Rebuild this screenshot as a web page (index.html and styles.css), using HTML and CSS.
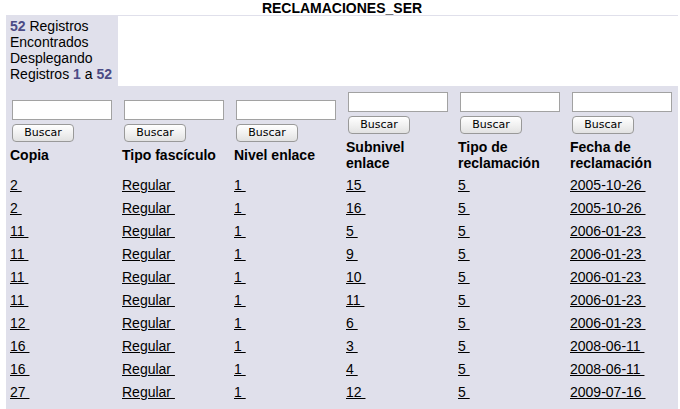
FILE: index.html
```html
<!DOCTYPE html>
<html lang="es">
<head>
<meta charset="utf-8">
<title>RECLAMACIONES_SER</title>
<link rel="stylesheet" href="styles.css">
</head>
<body>
<div class="title">RECLAMACIONES_SER</div>
<table class="grid">
  <colgroup>
    <col class="c"><col class="c"><col class="c"><col class="c"><col class="c"><col class="c">
  </colgroup>
  <tr class="info-row">
    <td class="info"><div class="info-box"><span class="ln"><b class="num">52</b> Registros</span><span class="ln">Encontrados</span><span class="ln">Desplegando</span><span class="ln">Registros <b class="num">1</b> a <b class="num">52</b></span></div></td>
    <td class="blank" colspan="5"><div class="blank-box"></div></td>
  </tr>
  <tr class="head-row">
    <th><div class="hcell"><input class="filter" type="text"><button class="btn" type="button">Buscar</button><span class="lbl">Copia</span></div></th>
    <th><div class="hcell"><input class="filter" type="text"><button class="btn" type="button">Buscar</button><span class="lbl">Tipo fascículo</span></div></th>
    <th><div class="hcell"><input class="filter" type="text"><button class="btn" type="button">Buscar</button><span class="lbl">Nivel enlace</span></div></th>
    <th><div class="hcell"><input class="filter" type="text"><button class="btn" type="button">Buscar</button><span class="lbl">Subnivel enlace</span></div></th>
    <th><div class="hcell"><input class="filter" type="text"><button class="btn" type="button">Buscar</button><span class="lbl">Tipo de reclamación</span></div></th>
    <th><div class="hcell"><input class="filter" type="text"><button class="btn" type="button">Buscar</button><span class="lbl">Fecha de reclamación</span></div></th>
  </tr>
  <tr class="row"><td><a href="#">2 </a></td><td><a href="#">Regular </a></td><td><a href="#">1 </a></td><td><a href="#">15 </a></td><td><a href="#">5 </a></td><td><a href="#">2005-10-26 </a></td></tr>
  <tr class="row"><td><a href="#">2 </a></td><td><a href="#">Regular </a></td><td><a href="#">1 </a></td><td><a href="#">16 </a></td><td><a href="#">5 </a></td><td><a href="#">2005-10-26 </a></td></tr>
  <tr class="row"><td><a href="#">11 </a></td><td><a href="#">Regular </a></td><td><a href="#">1 </a></td><td><a href="#">5 </a></td><td><a href="#">5 </a></td><td><a href="#">2006-01-23 </a></td></tr>
  <tr class="row"><td><a href="#">11 </a></td><td><a href="#">Regular </a></td><td><a href="#">1 </a></td><td><a href="#">9 </a></td><td><a href="#">5 </a></td><td><a href="#">2006-01-23 </a></td></tr>
  <tr class="row"><td><a href="#">11 </a></td><td><a href="#">Regular </a></td><td><a href="#">1 </a></td><td><a href="#">10 </a></td><td><a href="#">5 </a></td><td><a href="#">2006-01-23 </a></td></tr>
  <tr class="row"><td><a href="#">11 </a></td><td><a href="#">Regular </a></td><td><a href="#">1 </a></td><td><a href="#">11 </a></td><td><a href="#">5 </a></td><td><a href="#">2006-01-23 </a></td></tr>
  <tr class="row"><td><a href="#">12 </a></td><td><a href="#">Regular </a></td><td><a href="#">1 </a></td><td><a href="#">6 </a></td><td><a href="#">5 </a></td><td><a href="#">2006-01-23 </a></td></tr>
  <tr class="row"><td><a href="#">16 </a></td><td><a href="#">Regular </a></td><td><a href="#">1 </a></td><td><a href="#">3 </a></td><td><a href="#">5 </a></td><td><a href="#">2008-06-11 </a></td></tr>
  <tr class="row"><td><a href="#">16 </a></td><td><a href="#">Regular </a></td><td><a href="#">1 </a></td><td><a href="#">4 </a></td><td><a href="#">5 </a></td><td><a href="#">2008-06-11 </a></td></tr>
  <tr class="row"><td><a href="#">27 </a></td><td><a href="#">Regular </a></td><td><a href="#">1 </a></td><td><a href="#">12 </a></td><td><a href="#">5 </a></td><td><a href="#">2009-07-16 </a></td></tr>
  <tr class="pad-row"><td colspan="6"><div class="pad-box"></div></td></tr>
</table>
</body>
</html>
```
FILE: styles.css
```css
html, body {
  margin: 0;
  padding: 0;
  background: #ffffff;
}
body {
  font-family: "Liberation Sans", Arial, sans-serif;
  font-size: 14px;
  color: #000;
  padding: 0 2px 0 6px;
}
.title {
  font-weight: bold;
  font-size: 14px;
  line-height: 16px;
  text-align: center;
  height: 15px;
}
.grid {
  border-collapse: collapse;
  border-spacing: 0;
  table-layout: fixed;
  width: 672px;
  background: #e0e0eb;
}
.grid col.c {
  width: 112px;
}
.grid td, .grid th {
  padding: 0 0 0 4px;
  text-align: left;
  vertical-align: top;
}
.info-box {
  box-sizing: border-box;
  height: 71px;
  padding-top: 3px;
  line-height: 16px;
}
.ln {
  display: block;
}
.grid .blank {
  padding: 0;
}
.blank-box {
  background: #ffffff;
  margin-top: 1px;
  height: 70px;
}
.num {
  color: #4b4b85;
}
.hcell {
  box-sizing: border-box;
  height: 88px;
  padding-top: 3px;
  display: flex;
  flex-direction: column;
  justify-content: center;
  align-items: flex-start;
  font-weight: bold;
  line-height: 16px;
}
.filter {
  display: block;
  box-sizing: border-box;
  width: 100px;
  height: 20px;
  margin: 0 0 4px 2px;
  padding: 0 2px;
  border: 1px solid #a2a2a2;
  background: #ffffff;
  font-size: 12px;
}
.btn {
  display: block;
  box-sizing: border-box;
  width: 62px;
  height: 18px;
  margin: 0 0 5px 2px;
  padding: 0;
  border: 1px solid #999999;
  border-radius: 4px;
  background: linear-gradient(#ffffff, #f1f1f1 50%, #e2e2e2);
  font-family: "DejaVu Sans", Verdana, sans-serif;
  font-size: 11px;
  line-height: 16px;
  color: #000;
}
.lbl {
  display: block;
  width: 100px;
}
.row td {
  line-height: 23px;
}
.row td a {
  color: #000;
  text-decoration: underline;
  white-space: pre;
}
.pad-box {
  height: 20px;
}
```
